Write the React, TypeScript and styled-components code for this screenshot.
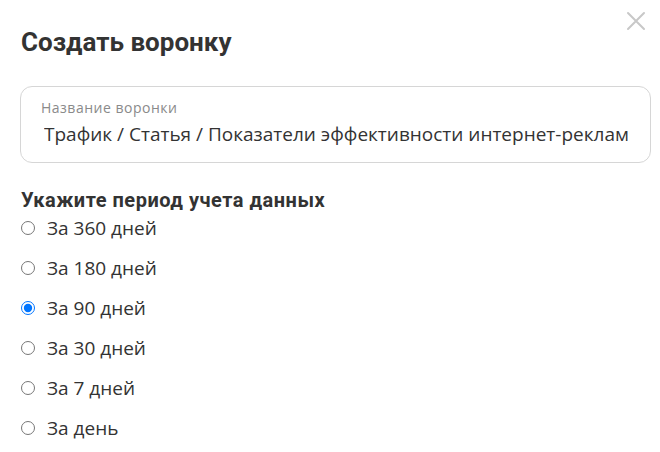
import React, { useState } from "react";
import styled, { createGlobalStyle } from "styled-components";

const Global = createGlobalStyle`
  html, body {
    margin: 0;
    padding: 0;
    background: #fff;
  }
`;

const periods = [
  "За 360 дней",
  "За 180 дней",
  "За 90 дней",
  "За 30 дней",
  "За 7 дней",
  "За день",
];

const App = () => {
  const [period, setPeriod] = useState(2);
  return (
    <>
      <Global />
      <Modal>
        <Close aria-label="close">
          <svg width="20" height="20" viewBox="0 0 20 20">
            <path
              d="M2 2 L18 18 M18 2 L2 18"
              stroke="#c8c8c8"
              strokeWidth="2"
              strokeLinecap="round"
            />
          </svg>
        </Close>
        <Title>Создать воронку</Title>
        <Field>
          <FieldLabel>Название воронки</FieldLabel>
          <FieldInput
            defaultValue="Трафик / Статья / Показатели эффективности интернет-рекламы"
          />
        </Field>
        <SectionTitle>Укажите период учета данных</SectionTitle>
        <RadioList>
          {periods.map((p, i) => (
            <RadioRow key={p}>
              <Radio
                type="radio"
                name="period"
                checked={period === i}
                onChange={() => setPeriod(i)}
              />
              <RadioText>{p}</RadioText>
            </RadioRow>
          ))}
        </RadioList>
      </Modal>
    </>
  );
};

export default App;

const Modal = styled.div`
  position: relative;
  width: 660px;
  height: 452px;
  box-sizing: border-box;
  padding: 26px 9px 0 20px;
  overflow: hidden;
  font-family: "Open Sans", "Noto Sans", sans-serif;
  color: #333;
`;

const Close = styled.button`
  position: absolute;
  top: 11px;
  right: 14px;
  padding: 0;
  border: none;
  background: none;
  display: flex;
`;

const Title = styled.h1`
  margin: 0 0 0 1px;
  font-family: Roboto, "Liberation Sans", sans-serif;
  font-size: 26px;
  font-weight: 700;
  line-height: 32px;
  color: #333;
`;

const Field = styled.label`
  display: flex;
  flex-direction: column;
  margin-top: 28px;
  height: 77px;
  box-sizing: border-box;
  border: 1px solid #d6d6d6;
  border-radius: 12px;
  padding: 11px 20px 0 20px;
`;

const FieldLabel = styled.span`
  font-size: 14px;
  letter-spacing: 0.5px;
  line-height: 20px;
  color: #8a8a8a;
`;

const FieldInput = styled.input`
  margin-top: 2px;
  padding: 0 0 0 3px;
  border: none;
  outline: none;
  font-family: "Open Sans", "Noto Sans", sans-serif;
  font-size: 19px;
  line-height: 28px;
  color: #333;
  background: transparent;
`;

const SectionTitle = styled.h2`
  margin: 24px 0 0 1px;
  font-family: Roboto, "Liberation Sans", sans-serif;
  font-size: 20px;
  letter-spacing: 0.5px;
  font-weight: 700;
  line-height: 26px;
  color: #333;
`;

const RadioList = styled.div`
  display: flex;
  flex-direction: column;
  gap: 12px;
  margin-top: 1px;
`;

const RadioRow = styled.label`
  display: flex;
  align-items: center;
  height: 28px;
  gap: 12px;
`;

const Radio = styled.input`
  margin: 0 0 0 1px;
  width: 14px;
  height: 14px;
`;

const RadioText = styled.span`
  font-size: 19px;
  line-height: 28px;
  color: #333;
`;
